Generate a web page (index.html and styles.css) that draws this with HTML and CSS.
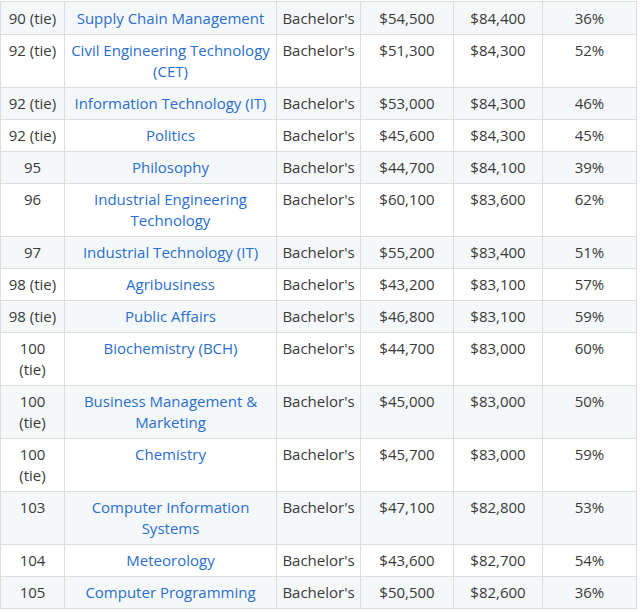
FILE: index.html
```html
<!DOCTYPE html>
<html>
<head>
<meta charset="utf-8">
<link rel="stylesheet" href="styles.css">
</head>
<body>
<table class="rank-table">
<tbody>
<tr><td class="c1">90 (tie)</td><td class="c2"><a href="#">Supply Chain Management</a></td><td class="c3">Bachelor's</td><td class="c4">$54,500</td><td class="c5">$84,400</td><td class="c6">36%</td></tr>
<tr><td>92 (tie)</td><td><a href="#">Civil Engineering Technology (CET)</a></td><td>Bachelor's</td><td>$51,300</td><td>$84,300</td><td>52%</td></tr>
<tr><td>92 (tie)</td><td><a href="#">Information Technology (IT)</a></td><td>Bachelor's</td><td>$53,000</td><td>$84,300</td><td>46%</td></tr>
<tr><td>92 (tie)</td><td><a href="#">Politics</a></td><td>Bachelor's</td><td>$45,600</td><td>$84,300</td><td>45%</td></tr>
<tr><td>95</td><td><a href="#">Philosophy</a></td><td>Bachelor's</td><td>$44,700</td><td>$84,100</td><td>39%</td></tr>
<tr><td>96</td><td><a href="#">Industrial Engineering Technology</a></td><td>Bachelor's</td><td>$60,100</td><td>$83,600</td><td>62%</td></tr>
<tr><td>97</td><td><a href="#">Industrial Technology (IT)</a></td><td>Bachelor's</td><td>$55,200</td><td>$83,400</td><td>51%</td></tr>
<tr><td>98 (tie)</td><td><a href="#">Agribusiness</a></td><td>Bachelor's</td><td>$43,200</td><td>$83,100</td><td>57%</td></tr>
<tr><td>98 (tie)</td><td><a href="#">Public Affairs</a></td><td>Bachelor's</td><td>$46,800</td><td>$83,100</td><td>59%</td></tr>
<tr><td>100 (tie)</td><td><a href="#">Biochemistry (BCH)</a></td><td>Bachelor's</td><td>$44,700</td><td>$83,000</td><td>60%</td></tr>
<tr><td>100 (tie)</td><td><a href="#">Business Management &amp; Marketing</a></td><td>Bachelor's</td><td>$45,000</td><td>$83,000</td><td>50%</td></tr>
<tr><td>100 (tie)</td><td><a href="#">Chemistry</a></td><td>Bachelor's</td><td>$45,700</td><td>$83,000</td><td>59%</td></tr>
<tr><td>103</td><td><a href="#">Computer Information Systems</a></td><td>Bachelor's</td><td>$47,100</td><td>$82,800</td><td>53%</td></tr>
<tr><td>104</td><td><a href="#">Meteorology</a></td><td>Bachelor's</td><td>$43,600</td><td>$82,700</td><td>54%</td></tr>
<tr><td>105</td><td><a href="#">Computer Programming</a></td><td>Bachelor's</td><td>$50,500</td><td>$82,600</td><td>36%</td></tr>
</tbody>
</table>
</body>
</html>
```

FILE: styles.css
```css
html, body {
  margin: 0;
  padding: 0;
  background: #fff;
}
body {
  padding-top: 1px;
  font-family: "Open Sans", "Liberation Sans", sans-serif;
  font-size: 15px;
  line-height: 21px;
  color: #3a3a3a;
}
.rank-table {
  box-sizing: border-box;
  width: 637px;
  table-layout: fixed;
  border-collapse: separate;
  border-spacing: 0;
  border-left: 1px solid #dddddd;
  border-top: 1px solid #dddddd;
}
.rank-table td {
  box-sizing: border-box;
  padding: 5px 5px;
  border-right: 1px solid #dddddd;
  border-bottom: 1px solid #dddddd;
  text-align: center;
  vertical-align: top;
}
.rank-table tr:first-child td {
  padding-top: 6px;
}
.rank-table tr:nth-child(odd) td {
  background: #f5f8f9;
}
.rank-table .c1 { width: 64px; }
.rank-table .c2 { width: 212px; }
.rank-table .c3 { width: 84px; }
.rank-table .c4 { width: 93px; }
.rank-table .c5 { width: 89px; }
.rank-table .c6 { width: 94px; }
.rank-table a {
  color: #2a6ecf;
  text-decoration: none;
}
```
